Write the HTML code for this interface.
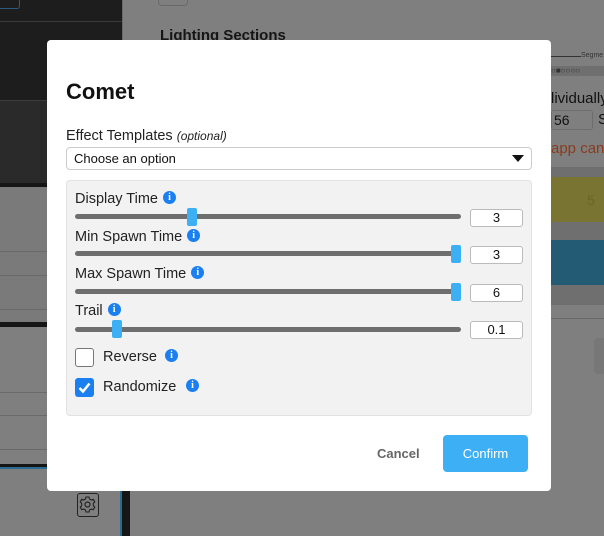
<!DOCTYPE html>
<html><head><style>
*{box-sizing:border-box;margin:0;padding:0}
body{width:604px;height:536px;overflow:hidden;background:#7f7f7f;position:relative;font-family:"Liberation Sans",sans-serif}
.a{position:absolute;white-space:nowrap}
.lbl{position:absolute;left:75px;font-size:14.5px;color:#222;white-space:nowrap}
.info{display:inline-block;width:13px;height:13px;border-radius:50%;background:#1a7ff0;color:#fff;font:bold 10px/13px "Liberation Serif",serif;text-align:center;vertical-align:3px;margin-left:5px}
.track{position:absolute;left:75px;width:386px;height:5px;background:#6e6e6e;border-radius:3px}
.thumb{position:absolute;width:10px;height:18px;background:#3daff5;border-radius:2px}
.num{position:absolute;left:470px;width:53px;height:18px;border:1px solid #bbb;border-radius:3px;background:#fff;font-size:13px;text-align:center;line-height:16px;color:#111}
.cb{position:absolute;left:75px;width:19px;height:19px;border-radius:3px}
</style></head><body>
<div class="a" style="left:0;top:0;width:122px;height:100px;background:#1d1d1d"></div>
<div class="a" style="left:0;top:0;width:20px;height:9px;border:1px solid #2c5a7a;border-top:none;border-left:none;border-radius:0 0 3px 0"></div>
<div class="a" style="left:0;top:21px;width:122px;height:1px;background:#3a3a3a"></div>
<div class="a" style="left:0;top:100px;width:122px;height:83px;background:#2a2a2a;border-top:1px solid #3c3c3c"></div>
<div class="a" style="left:0;top:183px;width:130px;height:4px;background:#161616"></div>
<div class="a" style="left:0;top:187px;width:130px;height:135px;background:#7a7a7a"></div>
<div class="a" style="left:0;top:251px;width:130px;height:1px;background:#6a6a6a"></div>
<div class="a" style="left:0;top:275px;width:130px;height:1px;background:#6a6a6a"></div>
<div class="a" style="left:0;top:309px;width:130px;height:1px;background:#6a6a6a"></div>
<div class="a" style="left:0;top:322px;width:130px;height:5px;background:#161616"></div>
<div class="a" style="left:0;top:392px;width:130px;height:1px;background:#6a6a6a"></div>
<div class="a" style="left:0;top:415px;width:130px;height:1px;background:#6a6a6a"></div>
<div class="a" style="left:0;top:449px;width:130px;height:1px;background:#6a6a6a"></div>
<div class="a" style="left:0;top:464px;width:130px;height:5px;background:#161616;border-bottom:2px solid #2a6a90"></div>
<div class="a" style="left:120px;top:469px;width:10px;height:67px;background:#161616;border-left:2px solid #2a6a90"></div>
<div class="a" style="left:77px;top:493px;width:22px;height:24px;border:1.5px solid #222;border-radius:3px">
<svg width="19" height="21" viewBox="0 0 19 21"><circle cx="9.5" cy="10.5" r="2.5" fill="none" stroke="#222" stroke-width="1.2"/><path d="M8 3h3l.5 2 1.8 1 2-.7 1.5 2.6-1.5 1.4v2.4l1.5 1.4-1.5 2.6-2-.7-1.8 1-.5 2H8l-.5-2-1.8-1-2 .7-1.5-2.6 1.5-1.4V9.3L2.2 7.9l1.5-2.6 2 .7 1.8-1z" fill="none" stroke="#222" stroke-width="1.1"/></svg></div>
<div class="a" style="left:122px;top:0;width:1px;height:40px;background:#6a6a6a"></div>
<div class="a" style="left:158px;top:0;width:30px;height:6px;border:1px solid #6a6a6a;border-top:none;border-radius:0 0 4px 4px"></div>
<div class="a" style="left:160px;top:27px;font-size:15px;font-weight:bold;color:#151515">Lighting Sections</div>
<div class="a" style="left:551px;top:56px;width:30px;height:1px;background:#333"></div>
<div class="a" style="left:581px;top:52px;font-size:7px;color:#333">Segme</div>
<div class="a" style="left:551px;top:66px;width:53px;height:10px;background:#6f6f6f;font-size:8px;color:#333;line-height:10px">○■○○○○</div>
<div class="a" style="left:551px;top:90px;font-size:15px;color:#111">lividually</div>
<div class="a" style="left:551px;top:110px;width:42px;height:20px;border:1px solid #6d6d6d;border-radius:3px;font-size:14px;line-height:18px;padding-left:2px;color:#111">56</div>
<div class="a" style="left:598px;top:111px;font-size:15px;color:#111">S</div>
<div class="a" style="left:551px;top:140px;font-size:15px;color:#8a3c1c">app can</div>
<div class="a" style="left:551px;top:167px;width:53px;height:10px;background:#6f6f6f"></div>
<div class="a" style="left:551px;top:177px;width:53px;height:45px;background:#7a7432"></div>
<div class="a" style="left:587px;top:192px;font-size:14px;color:#6a6428">5</div>
<div class="a" style="left:551px;top:222px;width:53px;height:18px;background:#6f6f6f"></div>
<div class="a" style="left:551px;top:240px;width:53px;height:45px;background:#235b75"></div>
<div class="a" style="left:551px;top:285px;width:53px;height:20px;background:#6f6f6f"></div>
<div class="a" style="left:551px;top:318px;width:53px;height:1px;background:#6a6a6a"></div>
<div class="a" style="left:594px;top:338px;width:20px;height:36px;background:#777;border-radius:4px"></div>
<div class="a" style="left:47px;top:40px;width:504px;height:451px;background:#fff;border-radius:4px"></div>
<div class="a" style="left:66px;top:79px;font-size:22px;font-weight:bold;color:#111">Comet</div>
<div class="a" style="left:66px;top:128px;font-size:14.5px;color:#222">Effect Templates <i style="font-size:12px">(optional)</i></div>
<div class="a" style="left:66px;top:147px;width:466px;height:23px;border:1px solid #ccc;border-radius:4px;font-size:13px;line-height:21px;padding-left:7px;color:#111">Choose an option</div>
<div class="a" style="left:512px;top:155px;width:0;height:0;border-left:6px solid transparent;border-right:6px solid transparent;border-top:7px solid #111"></div>
<div class="a" style="left:66px;top:180px;width:466px;height:236px;background:#f2f2f2;border:1px solid #e2e2e2;border-radius:4px"></div>
<div class="lbl" style="top:191px">Display Time<span class="info">i</span></div>
<div class="track" style="top:214px"></div><div class="thumb" style="left:187px;top:208px"></div><div class="num" style="top:209px">3</div>
<div class="lbl" style="top:229px">Min Spawn Time<span class="info">i</span></div>
<div class="track" style="top:251px"></div><div class="thumb" style="left:451px;top:245px"></div><div class="num" style="top:246px">3</div>
<div class="lbl" style="top:266px">Max Spawn Time<span class="info">i</span></div>
<div class="track" style="top:289px"></div><div class="thumb" style="left:451px;top:283px"></div><div class="num" style="top:284px">6</div>
<div class="lbl" style="top:303px">Trail<span class="info">i</span></div>
<div class="track" style="top:327px"></div><div class="thumb" style="left:112px;top:320px"></div><div class="num" style="top:321px">0.1</div>
<div class="cb" style="top:348px;border:1px solid #777;background:#fff"></div>
<div class="lbl" style="left:103px;top:349px">Reverse</div>
<span class="info a" style="left:165px;top:349px;margin:0">i</span>
<div class="cb" style="top:378px;background:#1a7ff0"><svg width="19" height="19"><path d="M4.5 10l3.5 3.5 6.5-8" stroke="#fff" stroke-width="2.5" fill="none"/></svg></div>
<div class="lbl" style="left:103px;top:379px">Randomize</div>
<span class="info a" style="left:186px;top:379px;margin:0">i</span>
<div class="a" style="left:377px;top:446px;font-size:13px;font-weight:bold;color:#666">Cancel</div>
<div class="a" style="left:443px;top:435px;width:85px;height:37px;background:#3daff5;border-radius:4px;color:#fff;font-size:13px;text-align:center;line-height:37px">Confirm</div>
</body></html>
